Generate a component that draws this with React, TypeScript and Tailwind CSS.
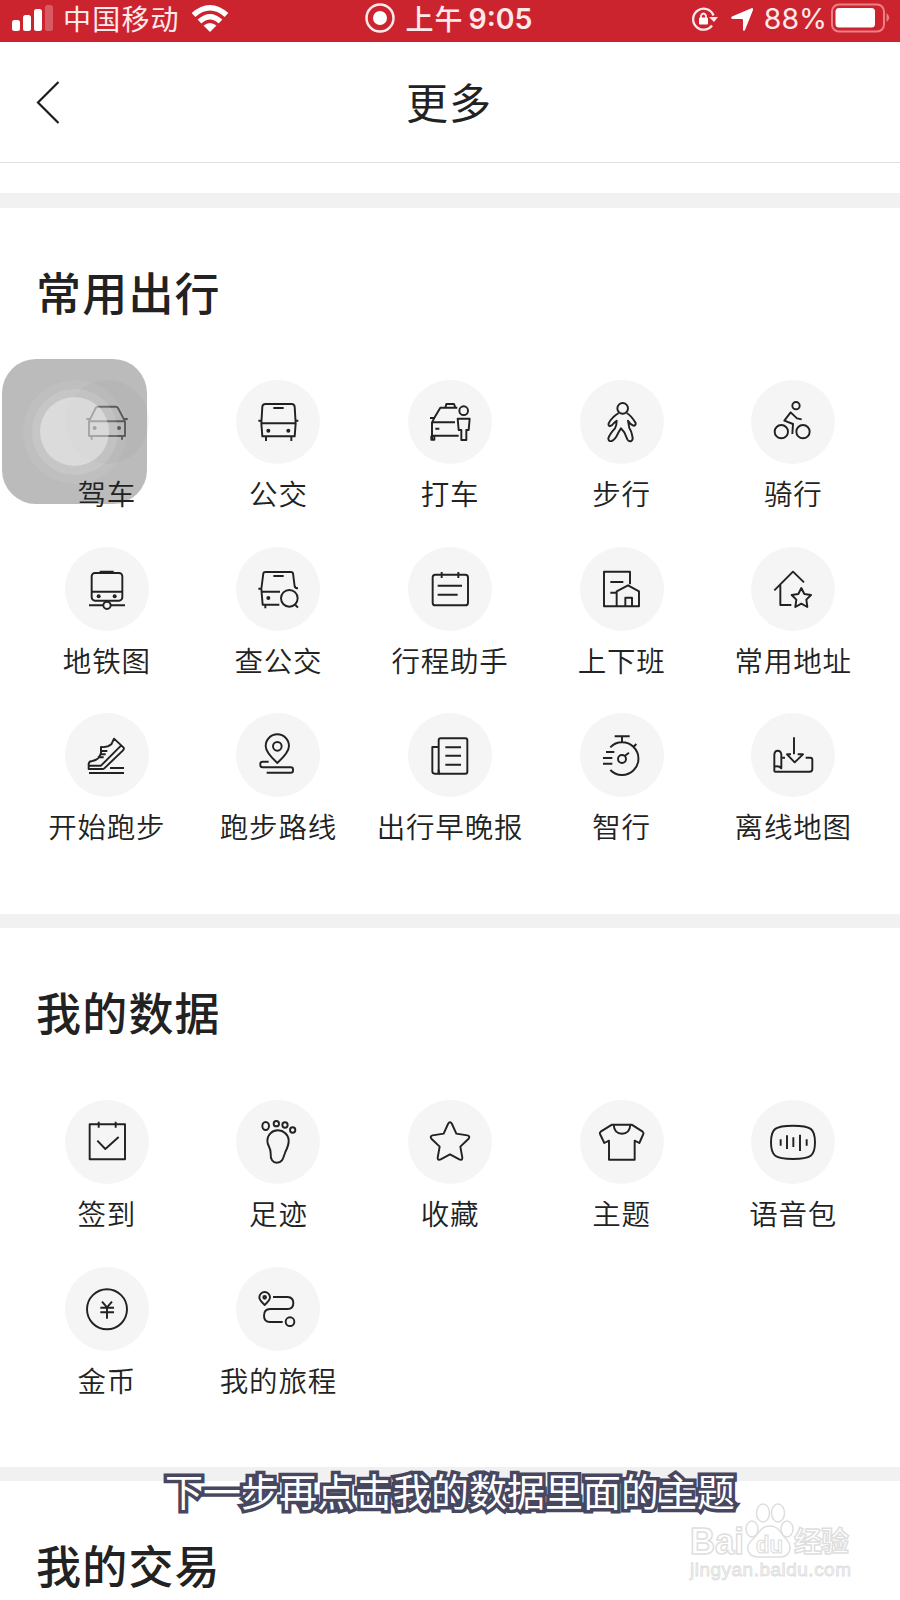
import React from "react";

type Item = { label: string; icon: React.ReactNode };

const dot = "fill-[#222] stroke-none";

/* every icon is drawn on a 252 x 252 board that fills its round button */
const travel: Item[] = [
  {
    label: "驾车",
    icon: (
      <>
        <path d="M72 124 L92 84 Q94 80 99 80 H152 Q157 80 159 84 L180 124 V168 H72 Z M72 124 H180 M64 117 H74 M178 117 H188 M80 168 V179 M171 168 V179" />
        <circle className={dot} cx="89" cy="144" r="6" />
        <circle className={dot} cx="162" cy="144" r="6" />
      </>
    ),
  },
  {
    label: "公交",
    icon: (
      <>
        <path d="M76 130 L79 80 Q80 72 88 72 H167 Q175 72 176 80 L179 130 L176 169 H79 Z M76 130 H179 M67 122 H76 M179 122 H187 M90 169 V183 M166 169 V183 M112 84 H143" />
        <circle className={dot} cx="97" cy="152" r="6" />
        <circle className={dot} cx="157" cy="152" r="6" />
      </>
    ),
  },
  {
    label: "打车",
    icon: (
      <>
        <path d="M148 83 H97 L80 112 L72 127 V178 M66 114 H78 M72 127 H141 M72 167 H152 M70 167 V179 H79 V168 M82 146 H94 M112 83 L115 72 H138 L142 83" />
        <circle cx="167" cy="92" r="13" />
        <path d="M149 116 H185 L182 150 H175 V180 H160 V150 H152 Z" />
      </>
    ),
  },
  {
    label: "步行",
    icon: (
      <>
        <circle cx="128" cy="85" r="16" />
        <path d="M116 99 Q94 113 86 130 Q84 139 91 138 Q96 137 102 129 L110 122 Q110 136 105 145 Q89 162 85 175 Q85 185 95 183 Q106 178 114 160 L123 145 L133 157 Q138 168 142 178 Q146 186 154 183 Q160 179 157 168 Q155 154 148 144 L144 122 Q152 134 160 137 Q168 137 167 129 Q154 107 140 99" />
      </>
    ),
  },
  {
    label: "骑行",
    icon: (
      <>
        <circle cx="135" cy="77" r="11" />
        <circle cx="91" cy="155" r="20" />
        <circle cx="156" cy="155" r="20" />
        <path d="M152 118 L138 115 L119 97 L100 122 L126 132 L124 162" />
      </>
    ),
  },
  {
    label: "地铁图",
    icon: (
      <>
        <rect x="80" y="78" width="92" height="83" rx="10" />
        <path d="M104 74 H146 M80 134 H172 M72 175 H114 M138 175 H180" />
        <circle cx="126" cy="175" r="11" />
        <circle className={dot} cx="101" cy="148" r="6" />
        <circle className={dot} cx="149" cy="148" r="6" />
      </>
    ),
  },
  {
    label: "查公交",
    icon: (
      <>
        <path d="M130 173 H80 L76 126 L82 79 Q83 75 88 75 H165 Q170 75 171 79 L176 118 Q178 124 186 124 M67 125 H76 M77 134 H132 M112 87 H143 M88 173 V184 M178 174 L186 182" />
        <circle cx="160" cy="154" r="25" />
        <circle className={dot} cx="97" cy="153" r="6" />
      </>
    ),
  },
  {
    label: "行程助手",
    icon: (
      <>
        <rect x="74" y="83" width="106" height="92" rx="8" />
        <path d="M101 75 V93 M151 75 V93 M89 116 H162 M89 143 H149" />
      </>
    ),
  },
  {
    label: "上下班",
    icon: <path d="M150 112 V74 H72 V178 H177 V133 L144 115 L110 133 V178 M136 178 V152 H156 V178 M91 105 H130 M91 137 H110" />,
  },
  {
    label: "常用地址",
    icon: (
      <>
        <path d="M70 130 L126 74 L159 106 M88 114 V174 H121" />
        <path d="M151 123 L160 141 L180 144 L166 158 L169 180 L151 170 L133 180 L136 158 L122 144 L142 141 Z" />
      </>
    ),
  },
  {
    label: "开始跑步",
    icon: (
      <path d="M71 168 V152 Q73 144 82 144 Q103 140 108 120 V102 Q128 104 139 94 L147 77 L176 104 Q178 108 174 112 L118 166 Q116 168 112 168 Z M72 158 H108 L168 98 M109 114 H127 M104 124 H122 M98 133 H116 M135 165 H177 M72 180 H177" />
    ),
  },
  {
    label: "跑步路线",
    icon: (
      <>
        <path d="M124 150 Q89 118 89 99 A35 35 0 0 1 159 99 Q159 118 124 150 Z" />
        <circle cx="124" cy="100" r="13" />
        <path d="M98 146 H80 Q73 146 73 152 V156 Q73 163 80 163 H164 Q171 163 171 169 V173 Q171 179 164 179 H92" />
      </>
    ),
  },
  {
    label: "出行早晚报",
    icon: (
      <>
        <rect x="92" y="76" width="86" height="106" rx="6" />
        <path d="M92 102 H73 V175 Q73 182 80 182 H96 M92 170 V182 M112 103 H159 M112 128 H159 M112 155 H159" />
      </>
    ),
  },
  {
    label: "智行",
    icon: (
      <>
        <path d="M91 103 A49 49 0 1 1 91 171 M104 70 H149 M126 70 V86 M160 102 L169 93 M134 129 L147 119 M78 117 H103 M69 135 H97 M69 152 H97" />
        <circle cx="126" cy="138" r="12" />
      </>
    ),
  },
  {
    label: "离线地图",
    icon: (
      <path d="M129 73 V124 M120 124 H108 L131 148 L156 124 H140 M70 176 V125 Q71 113 80 113 Q90 113 91 125 V166 Q84 157 71 161 M70 176 H176 Q184 176 184 168 V140 Q184 134 178 134 H164 M92 134 H102" />
    ),
  },
];

const mine: Item[] = [
  {
    label: "签到",
    icon: <path d="M74 73 H180 V178 H74 Z M101 65 V83 M152 65 V83 M97 122 L121 147 L161 111" />,
  },
  {
    label: "足迹",
    icon: (
      <>
        <ellipse cx="89" cy="78" rx="10" ry="12" />
        <circle cx="121" cy="71" r="8" />
        <circle cx="147" cy="75" r="8" />
        <circle cx="170" cy="90" r="8" />
        <path d="M126 91 C108 91 94 105 94 122 C94 138 104 140 104 160 C103 178 110 188 122 188 C141 188 142 172 148 156 C156 140 159 132 158 120 C157 104 143 91 126 91 Z" />
      </>
    ),
  },
  {
    label: "收藏",
    icon: (
      <path d="M120 72 Q126 62 132 72 L145 101 L178 106 Q188 109 181 117 L157 140 L163 173 Q163 182 154 178 L126 163 L98 178 Q89 182 89 173 L95 140 L71 117 Q64 109 74 106 L107 101 Z" />
    ),
  },
  {
    label: "主题",
    icon: (
      <path d="M96 74 H155 L188 95 Q192 98 190 102 L178 129 L164 122 V179 H87 V122 L73 129 L60 102 Q58 98 62 95 Z M101 75 Q103 101 126 101 Q149 101 151 75" />
    ),
  },
  {
    label: "语音包",
    icon: (
      <path d="M126 77 C180 77 192 86 192 127 C192 168 180 177 126 177 C72 177 60 168 60 127 C60 86 72 77 126 77 Z M89 118 V137 M108 106 V147 M127 112 V141 M147 104 V153 M167 118 V137" />
    ),
  },
  {
    label: "金币",
    icon: (
      <>
        <circle cx="126" cy="127" r="60" />
        <path d="M111 104 L126 121 L141 104 M126 121 V155 M106 122 H147 M106 136 H147" />
      </>
    ),
  },
  {
    label: "我的旅程",
    icon: (
      <>
        <path d="M86 114 Q70 100 70 91 A16 16 0 0 1 102 91 Q102 100 86 114 Z" />
        <circle className="fill-[#777]" cx="86" cy="91" r="4" />
        <path d="M111 90 H155 Q172 91 172 108 Q172 126 155 126 H102 Q84 127 84 146 Q84 164 102 165 H140" />
        <circle cx="162" cy="164" r="13" />
      </>
    ),
  },
];

const Grid = ({ items }: { items: Item[] }) => (
  <div className="grid grid-cols-5 gap-y-[30.5px] px-[21px]">
    {items.map((item) => (
      <div key={item.label} className="flex flex-col items-center">
        <div className="h-[84px] w-[84px] rounded-full bg-[#f5f5f5]">
          <svg viewBox="0 0 252 252" className="h-full w-full fill-none stroke-[#222]" strokeWidth="5.8" strokeLinejoin="round">
            {item.icon}
          </svg>
        </div>
        {/* labels stay above the floating button */}
        <span className="relative z-20 mt-[8px] mb-[2px] text-[28.5px] leading-[42px] font-[350] tracking-[0.8px] whitespace-nowrap text-[#222]">
          {item.label}
        </span>
      </div>
    ))}
  </div>
);

const Title = ({ children }: { children: React.ReactNode }) => (
  <h2 className="pl-[36px] text-[45px] leading-[64px] font-medium tracking-[1.2px] text-[#222]">{children}</h2>
);

const StatusBar = () => (
  <div className="grid h-[42px] grid-cols-3 items-start bg-[#cb242f] text-[28px] leading-[34px] text-[#ffe9ea]">
    <div className="flex h-[38px] items-center pl-3">
      <svg width="42" height="38" fill="#fff">
        <rect x="0" y="20" width="8" height="11" rx="2.5" />
        <rect x="11" y="15" width="8" height="16" rx="2.5" />
        <rect x="22" y="9" width="8" height="22" rx="2.5" />
        <rect x="33" y="5" width="8" height="26" rx="2.5" opacity="0.25" />
      </svg>
      <span className="ml-[9px] pb-[2px] tracking-[1.2px]">中国移动</span>
      <svg className="ml-[11px]" width="38" height="38" fill="none" stroke="#fff" strokeWidth="5.5">
        <path d="M2.5 15 Q19 0.500 35.500 15" />
        <path d="M8.500 21.500 Q19 12 29.500 21.500" />
        <path d="M12.500 25.500 Q19 20.500 25.500 25.500 L19 32 Z" fill="#fff" stroke="none" />
      </svg>
    </div>
    <div className="flex h-[38px] items-center justify-center">
      <svg className="-ml-[3px]" width="32" height="38" fill="none" stroke="#ffe9ea" strokeWidth="2.500">
        <circle cx="16" cy="18" r="13.500" />
        <circle cx="16" cy="18" r="7" fill="#fff" stroke="none" />
      </svg>
      <span className="ml-[9px] pb-[2px] font-medium tracking-[1px]">上午</span>
      <span className="ml-[5px] font-['Inter'] text-[28.5px] font-semibold">9:05</span>
    </div>
    <div className="flex h-[38px] items-center justify-end pr-[10px]">
      <svg width="28" height="38" fill="none" stroke="#ffe9ea" strokeWidth="2.300">
        <path d="M22 25.500 A10.500 10.500 0 1 1 23.500 15.500" />
        <path d="M19 17 H28 L24 22 Z" fill="#ffe9ea" stroke="none" />
        <rect x="9" y="17.500" width="9" height="7" rx="1" fill="#fff" stroke="none" />
        <path d="M11 18 V15.500 Q13.500 11.500 16 15.500 V18" strokeWidth="1.800" />
      </svg>
      <svg className="ml-[12px]" width="24" height="38" fill="#fff">
        <path d="M22 8 Q23.500 8 23 10 L15 30 Q13.500 32 13 29.500 V20 Q13 19 12 19 H2.500 Q0 18 2 16.500 Z" />
      </svg>
      <span className="ml-[10px] font-['Inter'] text-[28.5px]">88%</span>
      <svg className="ml-[4px]" width="59" height="38">
        <rect x="1" y="4.500" width="52" height="27" rx="7" fill="none" stroke="#ee7f86" strokeWidth="2" />
        <rect x="4.500" y="8" width="39.500" height="19.500" rx="3.500" fill="#fff" />
        <path d="M55.500 13 Q61 17.500 55.500 22 Z" fill="#ee7f86" />
      </svg>
    </div>
  </div>
);

/* Floating home button */
const AssistiveTouch = () => (
  <div className="absolute top-[359px] left-[2px] z-10 flex h-[145px] w-[145px] items-center justify-center rounded-[34px] bg-[#7d7d7d]/52">
    <div className="flex h-[104px] w-[104px] items-center justify-center rounded-full bg-white/6">
      <div className="flex h-[86px] w-[86px] items-center justify-center rounded-full bg-white/12">
        <div className="h-[69px] w-[69px] rounded-full bg-white/38" />
      </div>
    </div>
  </div>
);

const Watermark = () => (
  <svg className="absolute top-[1496px] left-[680px]" width="190" height="92" fill="#fff" stroke="#dedede" strokeWidth="1.500">
    <g fontFamily="Liberation Sans" fontWeight="bold">
      <text x="10" y="58" fontSize="36" textLength="54" lengthAdjust="spacingAndGlyphs">Bai</text>
      <ellipse cx="72" cy="33" rx="6" ry="8" />
      <ellipse cx="83" cy="17" rx="6.500" ry="9" />
      <ellipse cx="98" cy="17" rx="6.500" ry="9" />
      <ellipse cx="107" cy="33" rx="6" ry="8" />
      <path d="M90 30 C100 30 101 39 107 44 C113 51 110 61 100 61 H78 C67 61 65 50 72 44 C79 38 80 30 90 30 Z" />
      <text x="76" y="57" fontSize="24" strokeWidth="1.200" textLength="27" lengthAdjust="spacingAndGlyphs">du</text>
    </g>
    <text x="114" y="56" fontSize="28" fontWeight="bold" fontFamily="Noto Sans CJK SC" textLength="55">经验</text>
    <text x="10" y="80" fontSize="19" fontFamily="Liberation Sans" fill="#f2f2f2" strokeWidth="0.800" textLength="161">jingyan.baidu.com</text>
  </svg>
);

const App: React.FC = () => {
  return (
    <div className="relative h-[1600px] w-[900px] overflow-hidden bg-white font-['Noto_Sans_CJK_SC',sans-serif]">
      <StatusBar />

      {/* Header */}
      <header className="grid h-[121px] grid-cols-3 items-center border-b border-[#dfdfdf]">
        <svg className="ml-[36px]" width="24" height="44" fill="none" stroke="#1c1c1c" strokeWidth="2.200">
          <path d="M22.500 2 L2 22.500 L22.500 43" />
        </svg>
        <h1 className="pr-[2px] pb-[2px] text-center text-[42px] leading-[60px] tracking-[1px] text-[#222]">更多</h1>
      </header>

      <div className="mt-[30px] h-[15px] bg-[#f1f1f1]" />

      {/* Travel */}
      <section className="h-[706px] pt-[52px]">
        <Title>常用出行</Title>
        <div className="mt-[56px]">
          <Grid items={travel} />
        </div>
      </section>

      <div className="h-[14px] bg-[#f1f1f1]" />

      {/* My data */}
      <section className="h-[539px] pt-[52px]">
        <Title>我的数据</Title>
        <div className="mt-[56px]">
          <Grid items={mine} />
        </div>
      </section>

      <div className="h-[14px] bg-[#f1f1f1]" />

      {/* Orders */}
      <section className="pt-[52px]">
        <Title>我的交易</Title>
      </section>

      <AssistiveTouch />
      <Watermark />

      {/* Subtitle */}
      <p className="absolute top-[1462px] left-[165px] text-[38px] leading-[56px] whitespace-nowrap text-white [-webkit-text-stroke:7px_#47475f] [paint-order:stroke_fill]">
        下一步再点击我的数据里面的主题
      </p>
    </div>
  );
};

export default App;
